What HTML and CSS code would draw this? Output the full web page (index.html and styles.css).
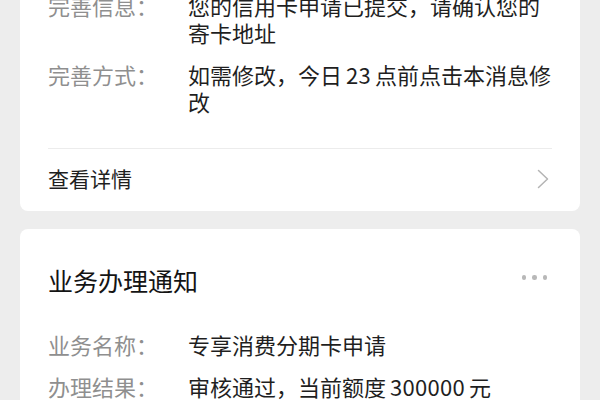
FILE: index.html
```html
<!DOCTYPE html>
<html lang="zh-CN">
<head>
<meta charset="utf-8">
<title>通知</title>
<link rel="stylesheet" href="styles.css">
</head>
<body>
<div class="page">
  <section class="card card-clipped">
    <div class="fields fields-top">
      <div class="row">
        <span class="label">完善信息：</span>
        <span class="value">您的信用卡申请已提交，请确认您的寄卡地址</span>
      </div>
      <div class="row">
        <span class="label">完善方式：</span>
        <span class="value">如需修改，今日<span class="num">23</span>点前点击本消息修改</span>
      </div>
    </div>
    <div class="footer-link">
      <span class="footer-text">查看详情</span>
      <svg class="chevron" width="12" height="20" viewBox="0 0 12 20" aria-hidden="true">
        <path d="M1.5 1.5 L10.5 10 L1.5 18.5" fill="none" stroke="#b4b4b4" stroke-width="1.5" stroke-linecap="round" stroke-linejoin="round"/>
      </svg>
    </div>
  </section>

  <section class="card">
    <div class="card-head">
      <h2 class="title">业务办理通知</h2>
      <span class="more"><i></i><i></i><i></i></span>
    </div>
    <div class="fields fields-bottom">
      <div class="row">
        <span class="label">业务名称：</span>
        <span class="value">专享消费分期卡申请</span>
      </div>
      <div class="row">
        <span class="label">办理结果：</span>
        <span class="value">审核通过，当前额度<span class="num">300000</span>元</span>
      </div>
    </div>
  </section>
</div>
</body>
</html>
```

FILE: styles.css
```css
* {
  box-sizing: border-box;
}

html, body {
  margin: 0;
  padding: 0;
}

body {
  background: #ededed;
  font-family: "Noto Sans CJK SC", "Noto Sans", sans-serif;
  color: #1f1f1f;
  width: 600px;
  height: 400px;
  overflow: hidden;
}

.page {
  display: flex;
  flex-direction: column;
  gap: 18px;
  padding: 0 20px;
}

.card {
  background: #ffffff;
  border-radius: 8px;
  padding: 0 28px;
}

.card-clipped {
  margin-top: -40px;
}

.fields {
  display: flex;
  flex-direction: column;
  gap: 15px;
}

.fields-top {
  padding: 32px 0 33px;
  border-bottom: 1px solid #ececec;
}

.fields-bottom {
  padding: 34px 0 30px;
}

.row {
  display: flex;
  font-size: 22px;
  line-height: 27px;
}

.label {
  flex: none;
  width: 140px;
  color: #8f8f8f;
}

.value {
  flex: 1;
  color: #1f1f1f;
}

.num {
  margin: 0 4px;
  letter-spacing: 0.3px;
}

.footer-link {
  height: 62px;
  display: flex;
  align-items: center;
  justify-content: space-between;
}

.footer-text {
  font-size: 21px;
  line-height: 27px;
  margin-top: -3px;
  color: #1f1f1f;
}

.chevron {
  display: block;
  margin-right: 3px;
  margin-top: -2px;
}

.card-head {
  display: flex;
  align-items: flex-start;
  justify-content: space-between;
  padding-top: 35px;
}

.title {
  margin: 0;
  font-size: 25px;
  line-height: 33px;
  font-weight: normal;
  color: #141414;
}

.more {
  display: flex;
  gap: 6px;
  margin-top: 11px;
  margin-right: 5px;
}

.more i {
  display: block;
  width: 4.5px;
  height: 4.5px;
  border-radius: 50%;
  background: #b8b8b8;
}
```
